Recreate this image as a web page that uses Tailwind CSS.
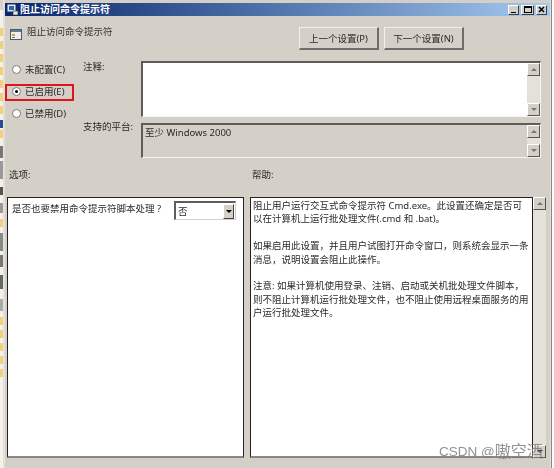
<!DOCTYPE html>
<html lang="zh">
<head>
  <meta charset="UTF-8" />
  <title>阻止访问命令提示符</title>
  <script src="https://cdn.jsdelivr.net/npm/@tailwindcss/browser@4"></script>
</head>
<body class="bg-white w-[554px] h-[468px] overflow-hidden">
  <div class="relative flex h-[468px] w-[554px] blur-[0.3px] text-[9.5px] leading-[13px] text-[#2a2a2a] font-['Noto_Sans','Noto_Sans_CJK_SC',sans-serif]">
    <!-- strip of the desktop behind the dialog -->
    <div class="flex w-[3px] flex-col bg-[#f4f1e8]">
      <div class="h-[10px] bg-[#d8d4cc]"></div>
      <div class="mt-[18px] h-[8px] bg-[#f3cf7e]"></div>
      <div class="mt-[5px] h-[8px] bg-[#f3cf7e]"></div>
      <div class="mt-[5px] h-[8px] bg-[#f3cf7e]"></div>
      <div class="mt-[5px] h-[8px] bg-[#f3cf7e]"></div>
      <div class="mt-[5px] h-[8px] bg-[#f3cf7e]"></div>
      <div class="mt-[5px] h-[8px] bg-[#f3cf7e]"></div>
      <div class="mt-[5px] h-[8px] bg-[#f3cf7e]"></div>
      <div class="mt-[6px] h-[8px] bg-[#2a4a9a]"></div>
      <div class="mt-[2px] h-[8px] bg-[#f3cf7e]"></div>
      <div class="mt-[8px] h-[12px] bg-[#777]"></div>
      <div class="mt-[3px] h-[18px] bg-[#999]"></div>
      <div class="mt-[8px] h-[8px] bg-[#555]"></div>
      <div class="mt-[8px] h-[10px] bg-[#999]"></div>
      <div class="mt-[6px] h-[8px] bg-[#f3cf7e]"></div>
      <div class="mt-[6px] h-[18px] bg-[#888]"></div>
      <div class="mt-[4px] h-[12px] bg-[#777]"></div>
      <div class="mt-[8px] h-[14px] bg-[#666]"></div>
      <div class="mt-[10px] h-[12px] bg-[#aaa]"></div>
      <div class="mt-[6px] h-[8px] bg-[#f3cf7e]"></div>
      <div class="mt-[5px] h-[8px] bg-[#f3cf7e]"></div>
      <div class="mt-[5px] h-[8px] bg-[#f3cf7e]"></div>
      <div class="mt-[5px] h-[8px] bg-[#f3cf7e]"></div>
      <div class="mt-[5px] h-[8px] bg-[#f3cf7e]"></div>
    </div>

    <div class="flex w-[548px] flex-col bg-[#d4d0c8] border-l-2 border-r border-[#e3e0da]">
      <!-- title bar -->
      <div class="flex h-[13px] items-center mt-[3px] pl-[1px] pr-[3px] bg-linear-to-r from-[#0a246a] to-[#a6caf0]">
        <svg width="13" height="13" viewBox="0 0 13 13" class="mr-[1px]">
          <rect x="1" y="1" width="9" height="8" fill="#dfe8f5" stroke="#1c2f55" />
          <rect x="3" y="3" width="5" height="4" fill="#2f62c0" />
          <rect x="7" y="8" width="5" height="4" fill="#e8e4d8" stroke="#333" stroke-width="0.6" />
        </svg>
        <span class="text-white text-[10px] font-semibold">阻止访问命令提示符</span>
        <div class="ml-auto flex gap-[2px]">
          <div class="flex h-[10px] w-[11px] items-end justify-center bg-[#d4d0c8] border-t border-l border-white border-r border-b border-r-[#404040] border-b-[#404040] pb-[1px]">
            <div class="h-[1px] w-[5px] bg-black"></div>
          </div>
          <div class="flex h-[10px] w-[13px] items-center justify-center bg-[#d4d0c8] border-t border-l border-white border-r border-b border-r-[#404040] border-b-[#404040]">
            <div class="h-[7px] w-[8px] border border-t-2 border-black"></div>
          </div>
          <div class="flex h-[10px] w-[11px] items-center justify-center bg-[#d4d0c8] border-t border-l border-white border-r border-b border-r-[#404040] border-b-[#404040]">
            <svg width="7" height="7" viewBox="0 0 7 7"><path d="M1 1 6 6M6 1 1 6" stroke="#000" stroke-width="1.5" /></svg>
          </div>
        </div>
      </div>

      <!-- header row -->
      <div class="flex h-[32px] items-start">
        <svg width="14" height="14" viewBox="0 0 14 14" class="ml-[4px] mt-[11px]">
          <rect x="1.5" y="2.5" width="11" height="10" fill="#eef0ee" stroke="#556" />
          <rect x="2" y="3" width="10" height="2" fill="#5a7f8e" />
          <rect x="3" y="7" width="3" height="2" fill="#c9a24a" />
          <rect x="3" y="10" width="3" height="1" fill="#4f8a5b" />
        </svg>
        <span class="ml-[4px] mt-[9px] text-[#333]">阻止访问命令提示符</span>
        <div class="ml-auto mr-[86px] mt-[11px] flex gap-[5px]">
          <div class="flex h-[23px] w-[80px] items-center justify-center border border-t-[#f2f0ec] border-l-[#f2f0ec] border-r-2 border-b-2 border-r-[#6f6d68] border-b-[#6f6d68]">上一个设置(P)</div>
          <div class="flex h-[23px] w-[80px] items-center justify-center border border-t-[#f2f0ec] border-l-[#f2f0ec] border-r-2 border-b-2 border-r-[#6f6d68] border-b-[#6f6d68]">下一个设置(N)</div>
        </div>
      </div>

      <!-- settings area -->
      <div class="flex h-[107px] mt-[13px]">
        <div class="relative flex w-[78px] flex-col pl-[7px] pt-[2px] gap-[9px]">
          <label class="flex h-[13px] items-center gap-[4px]"><span class="h-[9px] w-[9px] rounded-full border border-[#777] bg-white"></span>未配置(C)</label>
          <label class="flex h-[13px] items-center gap-[4px]"><span class="flex h-[9px] w-[9px] items-center justify-center rounded-full border border-[#777] bg-white"><span class="h-[3px] w-[3px] rounded-full bg-black"></span></span>已启用(E)</label>
          <label class="flex h-[13px] items-center gap-[4px]"><span class="h-[9px] w-[9px] rounded-full border border-[#777] bg-white"></span>已禁用(D)</label>
          <!-- red highlight drawn on the screenshot -->
          <div class="absolute left-[0px] top-[23px] h-[17px] w-[69px] border-2 border-[#e0141c]"></div>
        </div>

        <div class="w-[58px] -mt-[1px]">
          <p>注释:</p>
          <p class="mt-[47px]">支持的平台:</p>
        </div>

        <div class="flex w-[400px] flex-col">
          <div class="flex h-[56px] border-t-2 border-l-2 border-[#5f5d59] border-r border-b border-r-[#f5f4f0] border-b-[#f5f4f0]">
            <div class="flex-1 bg-white"></div>
            <div class="flex w-[13px] flex-col justify-between bg-[#e4e1db]">
              <div class="flex h-[13px] items-center justify-center bg-[#d4d0c8] border border-t-white border-l-white border-r-[#555] border-b-[#555]"><span class="h-0 w-0 border-x-[3px] border-b-[3px] border-x-transparent border-b-[#777]"></span></div>
              <div class="flex h-[13px] items-center justify-center bg-[#d4d0c8] border border-t-white border-l-white border-r-[#555] border-b-[#555]"><span class="h-0 w-0 border-x-[3px] border-t-[3px] border-x-transparent border-t-[#777]"></span></div>
            </div>
          </div>
          <div class="flex h-[35px] mt-[6px] border-t-2 border-l-2 border-[#5f5d59] border-r border-b border-r-[#f5f4f0] border-b-[#f5f4f0]">
            <div class="flex-1 pl-[2px] pt-[1px]">至少 Windows 2000</div>
            <div class="flex w-[13px] flex-col justify-between bg-[#e4e1db]">
              <div class="flex h-[13px] items-center justify-center bg-[#d4d0c8] border border-t-white border-l-white border-r-[#555] border-b-[#555]"><span class="h-0 w-0 border-x-[3px] border-b-[3px] border-x-transparent border-b-[#777]"></span></div>
              <div class="flex h-[13px] items-center justify-center bg-[#d4d0c8] border border-t-white border-l-white border-r-[#555] border-b-[#555]"><span class="h-0 w-0 border-x-[3px] border-t-[3px] border-x-transparent border-t-[#777]"></span></div>
            </div>
          </div>
        </div>
      </div>

      <!-- section labels -->
      <div class="flex h-[13px]">
        <span class="ml-[4px] w-[243px]">选项:</span>
        <span>帮助:</span>
      </div>

      <!-- bottom panes -->
      <div class="flex h-[261px] mt-[16px] ml-[2px]">
        <div class="relative h-full w-[237px] bg-white border border-[#222] border-b-2 border-b-[#888]">
          <p class="absolute left-[4px] top-[4px]">是否也要禁用命令提示符脚本处理 ?</p>
          <div class="absolute left-[166px] top-[3px] flex h-[19px] w-[62px] items-center justify-between pl-[2px] pr-[1px] border-t-2 border-l-2 border-[#5f5d59] border-r border-b border-r-[#d4d0c8] border-b-[#d4d0c8]">
            <span>否</span>
            <span class="flex h-[15px] w-[11px] items-center justify-center bg-[#d4d0c8] border border-t-white border-l-white border-r-[#444] border-b-[#444]"><span class="h-0 w-0 border-x-[3px] border-t-[3px] border-x-transparent border-t-black"></span></span>
          </div>
        </div>

        <div class="ml-[6px] h-full w-[283px] bg-white border border-[#222] border-b-2 border-b-[#888] pl-[2px] pr-[2px] pt-[1px] leading-[13.4px]">
          <p>阻止用户运行交互式命令提示符 Cmd.exe。此设置还确定是否可以在计算机上运行批处理文件(.cmd 和 .bat)。</p>
          <p class="mt-[13.4px]">如果启用此设置，并且用户试图打开命令窗口，则系统会显示一条消息，说明设置会阻止此操作。</p>
          <p class="mt-[13.4px]">注意: 如果计算机使用登录、注销、启动或关机批处理文件脚本，则不阻止计算机运行批处理文件，也不阻止使用远程桌面服务的用户运行批处理文件。</p>
        </div>

        <div class="flex w-[13px] flex-col justify-between bg-[#e4e1db]">
          <div class="flex h-[13px] items-center justify-center bg-[#d4d0c8] border border-t-white border-l-white border-r-[#555] border-b-[#555]"><span class="h-0 w-0 border-x-[3px] border-b-[3px] border-x-transparent border-b-[#777]"></span></div>
          <div class="flex h-[13px] items-center justify-center bg-[#d4d0c8] border border-t-white border-l-white border-r-[#555] border-b-[#555]"><span class="h-0 w-0 border-x-[3px] border-t-[3px] border-x-transparent border-t-[#333]"></span></div>
        </div>
      </div>
    </div>

    <!-- edge of the window behind the dialog -->
    <div class="w-[3px] border-l border-[#888] bg-white"></div>

    <!-- watermark -->
    <div class="absolute left-[439px] top-[442px] flex items-center h-[18px] text-[13.5px] text-[#777]/80 font-['Liberation_Sans','Noto_Sans_CJK_SC',sans-serif]">CSDN @<span class="text-[16px]">嗷空酒</span></div>
  </div>
</body>
</html>
